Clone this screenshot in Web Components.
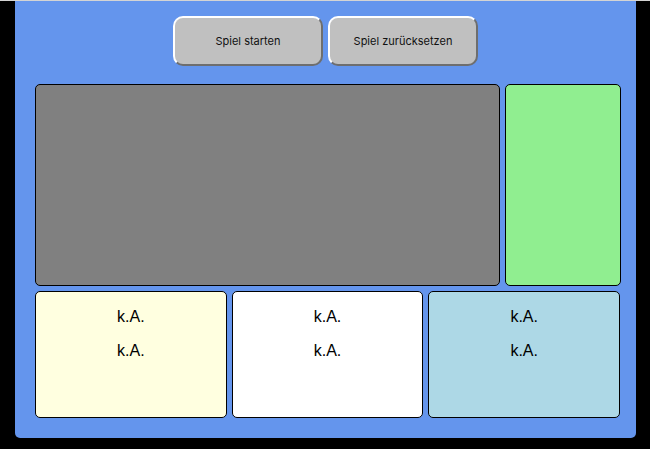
<!DOCTYPE html>
<html lang="de">
<head>
<meta charset="utf-8">
<title>Spiel</title>
<style>
  html { background: #000; }
  body { margin: 0; border-top: 1px solid #d4d4d4; font-family: "Liberation Sans", sans-serif; color: #000; }
</style>
</head>
<body>
<game-board>
  <game-button slot="actions">Spiel starten</game-button>
  <game-button slot="actions">Spiel zurücksetzen</game-button>
  <game-panel slot="field" style="--fill: gray"></game-panel>
  <game-panel slot="field" style="--fill: lightgreen"></game-panel>
  <game-panel slot="info" style="--fill: #ffffe0"><p>k.A.</p><p>k.A.</p></game-panel>
  <game-panel slot="info" style="--fill: white"><p>k.A.</p><p>k.A.</p></game-panel>
  <game-panel slot="info" style="--fill: lightblue"><p>k.A.</p><p>k.A.</p></game-panel>
</game-board>
<script>
  class GameButton extends HTMLElement {
    constructor() {
      super();
      this.attachShadow({ mode: "open" }).innerHTML = `
        <style>
          :host { display: block; width: 150px; }
          button {
            box-sizing: border-box; width: 100%; height: 50px; padding: 0;
            border: 2px solid; border-color: #fff #6e6e6e #6e6e6e #fff; border-radius: 10px;
            background: silver; color: #111; font: 11px/14px Inter, "Liberation Sans", sans-serif;
          }
        </style>
        <button type="button"><slot></slot></button>`;
    }
  }
  class GamePanel extends HTMLElement {
    constructor() {
      super();
      this.attachShadow({ mode: "open" }).innerHTML = `
        <style>
          :host {
            display: block; box-sizing: border-box; border: 1px solid #000; border-radius: 5px;
            background: var(--fill); text-align: center; overflow: hidden;
          }
          ::slotted(p) { margin: 16px 0; font-size: 16px; line-height: 18px; }
        </style>
        <slot></slot>`;
    }
  }
  class GameBoard extends HTMLElement {
    constructor() {
      super();
      this.attachShadow({ mode: "open" }).innerHTML = `
        <style>
          :host {
            display: block; margin: 0 14px 0 15px; padding: 15px 16px 20px 20px;
            border-radius: 0 0 5px 5px; background: cornflowerblue;
          }
          .actions { display: flex; justify-content: center; gap: 5px; margin-bottom: 18px; padding-right: 4px; }
          .field, .info { display: grid; gap: 5px; }
          .field { grid-template-columns: 4fr 1fr; grid-auto-rows: 202px; margin-right: -1px; }
          .info { grid-template-columns: repeat(3, 1fr); grid-auto-rows: 127px; margin-top: 5px; }
        </style>
        <div class="actions"><slot name="actions"></slot></div>
        <div class="field"><slot name="field"></slot></div>
        <div class="info"><slot name="info"></slot></div>`;
    }
  }
  customElements.define("game-button", GameButton);
  customElements.define("game-panel", GamePanel);
  customElements.define("game-board", GameBoard);
</script>
</body>
</html>
